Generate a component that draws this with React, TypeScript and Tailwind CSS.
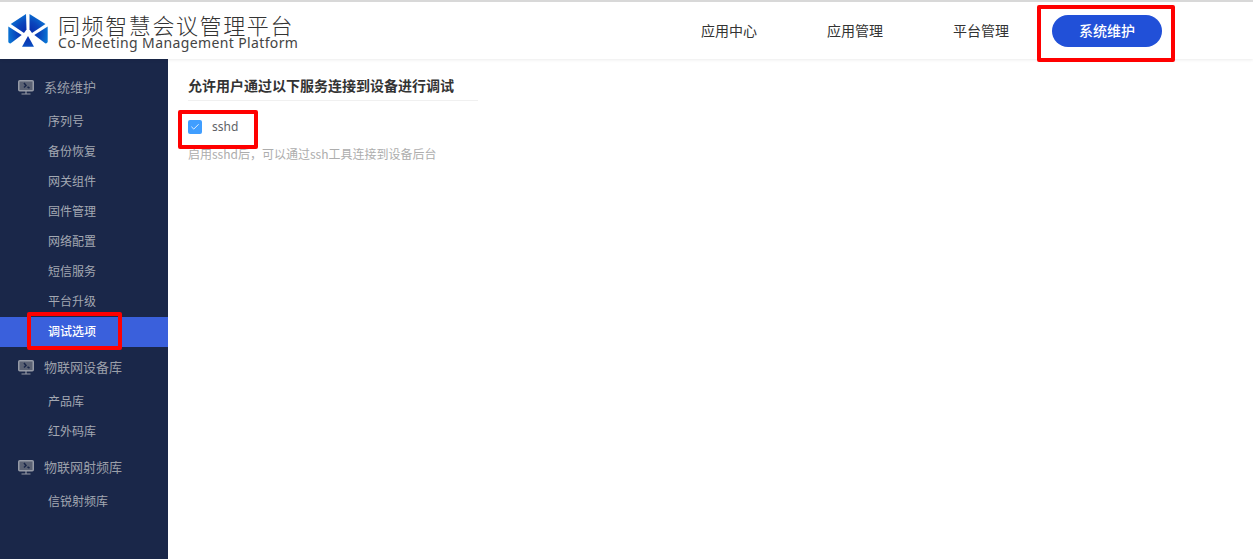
import { Check } from "lucide-react";

const groups = [
  { title: "系统维护", items: ["序列号", "备份恢复", "网关组件", "固件管理", "网络配置", "短信服务", "平台升级", "调试选项"] },
  { title: "物联网设备库", items: ["产品库", "红外码库"] },
  { title: "物联网射频库", items: ["信锐射频库"] },
];

const navItems = ["应用中心", "应用管理", "平台管理"];

const Logo = () => (
  <svg width="40" height="33" viewBox="0 0 40 33" className="shrink-0">
    <defs>
      <radialGradient id="logoBlue" gradientUnits="userSpaceOnUse" cx="20" cy="19" r="21">
        <stop offset="0%" stopColor="#0726a8" />
        <stop offset="55%" stopColor="#0a45bc" />
        <stop offset="100%" stopColor="#0a78d6" />
      </radialGradient>
    </defs>
    <path d="M18 0 L18.5 15.5 L16 19 L2.7 10 Z" fill="url(#logoBlue)" />
    <path d="M21.5 0 L21.5 15.5 L24 19 L37.5 10 Z" fill="url(#logoBlue)" />
    <path d="M0.3 12.5 L13.7 21 L2.5 29.5 Q0.3 29.5 0.3 27.5 Z" fill="url(#logoBlue)" />
    <path d="M39.7 12.5 L26.3 21 L37.5 29.5 Q39.7 29.5 39.7 27.5 Z" fill="url(#logoBlue)" />
    <path d="M20 22 L26 32.7 L14 32.7 Z" fill="url(#logoBlue)" />
  </svg>
);

const MonitorIcon = () => (
  <svg width="16" height="15" viewBox="0 0 16 15" className="shrink-0">
    <rect x="0.75" y="0.75" width="14.5" height="10" rx="1" fill="#5b6274" stroke="#959aa6" strokeWidth="1.5" />
    <path d="M6 3 L8 5.5 L6 7.5 M9.5 7 L11.5 8" stroke="#1a2749" strokeWidth="1.5" fill="none" />
    <path d="M8 11 V14 M3.5 14 H12.5" stroke="#959aa6" strokeWidth="1.2" />
  </svg>
);

export default function App() {
  return (
    <div className="h-[559px] w-[1253px] overflow-hidden bg-white flex flex-col font-['Noto_Sans_CJK_SC','Noto_Sans',sans-serif]">
      <div className="relative h-[59px] shrink-0 border-t-2 border-[#d8d8d8] flex items-center shadow-[0_1px_3px_rgba(0,0,0,0.08)] z-10 bg-white">
        <div className="flex items-center gap-[10px] pl-2">
          <Logo />
          <div className="flex flex-col mt-[4px]">
            <p className="mb-[3px] text-[22px] leading-[18px] tracking-[1.6px] font-light text-[#333]">同频智慧会议管理平台</p>
            <p className="text-[14px] leading-[14px] tracking-[0.38px] text-[#444] font-['Noto_Sans',sans-serif]">Co-Meeting Management Platform</p>
          </div>
        </div>
        <div className="ml-auto mr-[91px] flex items-center gap-[14px]">
          {navItems.map((item) => (
            <div key={item} className="w-[112px] -translate-x-px text-center text-[14px] text-[#333]">{item}</div>
          ))}
          <div className="w-[110px] h-[32px] rounded-full bg-[#2150d8] text-white text-[14px] font-medium flex items-center justify-center">系统维护</div>
        </div>
        <div className="absolute left-[1037px] top-[3px] w-[138px] h-[57px] border-4 border-[#ff0000] rounded-[2px]" />
      </div>

      <div className="flex flex-1">
        <div className="w-[168px] shrink-0 bg-[#1a2749] pt-2 flex flex-col gap-px">
          {groups.map((group) => (
            <div key={group.title}>
              <div className="h-[39px] pt-px pl-[18px] flex items-center gap-[10px] text-[13px] text-[#9a9fa9]">
                <MonitorIcon />
                <span>{group.title}</span>
              </div>
              {group.items.map((item) => (
                <div
                  key={item}
                  className={
                    item === "调试选项"
                      ? "relative mt-px -mb-px h-[30px] pb-0.5 pl-12 flex items-center text-[12px] font-medium text-white bg-[#3a60dc]"
                      : "h-[30px] pl-12 flex items-center text-[12px] text-[#a3a8b2]"
                  }
                >
                  {item}
                  {item === "调试选项" && (
                    <div className="absolute left-[27px] -top-[5px] w-[95px] h-[38px] border-4 border-[#ff0000] rounded-[2px]" />
                  )}
                </div>
              ))}
            </div>
          ))}
        </div>

        <div className="relative flex-1 pl-5 pt-[15px]">
          <div className="w-[290px] h-[27px] border-b border-[#f0f0f0] text-[14px] leading-[22px] font-bold text-[#333] whitespace-nowrap">允许用户通过以下服务连接到设备进行调试</div>
          <div className="mt-[19px] flex items-center gap-[10px] h-[14px]">
            <div className="w-[14px] h-[14px] rounded-[2px] bg-[#409eff] flex items-center justify-center">
              <Check size={10} color="white" strokeWidth={2} />
            </div>
            <span className="text-[12px] text-[#606266] font-['Noto_Sans',sans-serif]">sshd</span>
          </div>
          <p className="mt-[13px] text-[12px] leading-[14px] text-[#adadad]">启用sshd后，可以通过ssh工具连接到设备后台</p>
          <div className="absolute left-[10px] top-[51px] w-[80px] h-[39px] border-4 border-[#ff0000] rounded-[2px]" />
        </div>
      </div>
    </div>
  );
}
